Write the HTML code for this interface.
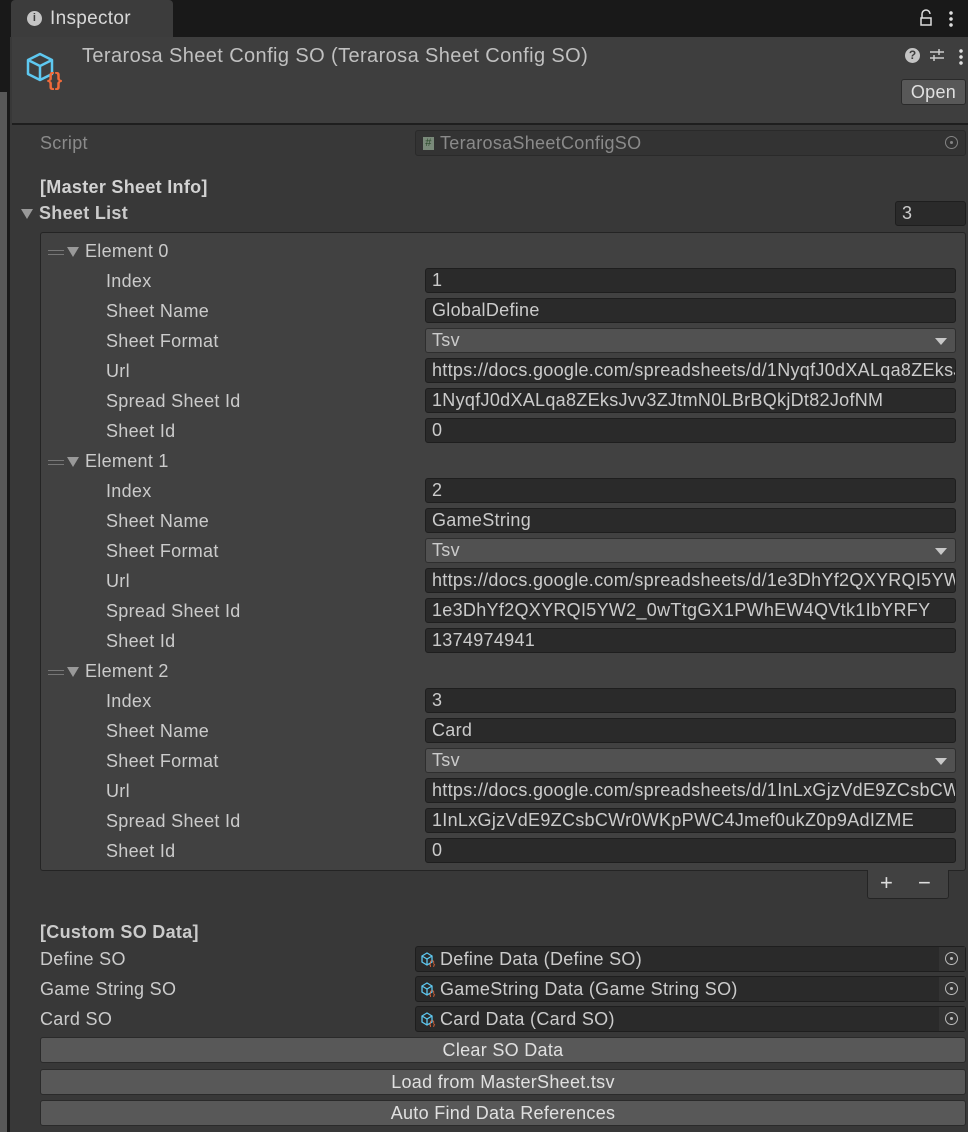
<!DOCTYPE html>
<html><head><meta charset="utf-8"><style>
*{box-sizing:border-box;margin:0;padding:0}
body{width:968px;height:1132px;background:#383838;font-family:"Liberation Sans",sans-serif;font-size:18px;letter-spacing:0.3px;color:#cbcbcb;position:relative;overflow:hidden}
.a{position:absolute;white-space:nowrap;overflow:hidden}
.lbl{position:absolute;left:106px;line-height:20px}
.fld{position:absolute;left:425px;width:531px;height:25px;background:#2a2a2a;border:1px solid #1e1e1e;border-radius:3px;padding-left:6px;line-height:23px;white-space:nowrap;overflow:hidden}
.dd{background:#515151;border-color:#2e2e2e}
.dd:after{content:"";position:absolute;right:8px;top:9px;border-left:6px solid transparent;border-right:6px solid transparent;border-top:7px solid #c8c8c8}
.el{position:absolute;left:48px;line-height:20px}
.el .h{display:inline-block;width:16px;height:5px;border-top:1px solid #777;border-bottom:1px solid #777;vertical-align:middle;margin-right:3px}
.tri{display:inline-block;border-left:6px solid transparent;border-right:6px solid transparent;border-top:10px solid #999;vertical-align:middle;margin-right:6px}
.obj{position:absolute;left:415px;width:551px;height:26px;background:#2a2a2a;border:1px solid #1e1e1e;border-radius:3px;line-height:24px;padding-left:24px}
.obj .pick{position:absolute;right:0;top:0;width:26px;height:24px;background:#333}
.pick:after{content:"";position:absolute;left:6px;top:5px;width:11px;height:11px;border:1.5px solid #bbb;border-radius:50%}
.pick:before{content:"";position:absolute;left:11px;top:10px;width:3px;height:3px;background:#bbb;border-radius:50%}
.btn{position:absolute;left:40px;width:926px;height:26px;background:#585858;border:1px solid #2a2a2a;border-radius:3px;text-align:center;line-height:24px;color:#e0e0e0}
.ic{position:absolute;left:4px;top:4px}
</style></head><body>
<div class="a" style="left:0;top:0;width:968px;height:37px;background:#191919"></div>
<div class="a" style="left:11px;top:0;width:162px;height:37px;background:#3c3c3c;border-radius:4px 4px 0 0"></div>
<div class="a" style="left:27px;top:11px;width:15px;height:15px;border-radius:50%;background:#c4c4c4;color:#3c3c3c;font-size:11px;font-weight:bold;text-align:center;line-height:15px">i</div>
<div class="a" style="left:50px;top:8px;font-size:19px;color:#d8d8d8">Inspector</div>
<svg class="a" style="left:918px;top:8px" width="16" height="20"><path d="M4 10V6a4 4 0 0 1 8 0" stroke="#ddd" stroke-width="1.5" fill="none"/><rect x="3" y="10" width="10" height="7" stroke="#ddd" stroke-width="1.5" fill="none"/></svg>
<div class="a" style="left:949px;top:10px;width:4px;height:18px;background:radial-gradient(circle,#ddd 1.6px,transparent 2px) 0 0/4px 6px"></div>
<div class="a" style="left:0;top:37px;width:10px;height:1095px;background:#191919"></div>
<div class="a" style="left:0;top:92px;width:7px;height:1040px;background:#585858"></div>
<div class="a" style="left:12px;top:37px;width:956px;height:86px;background:#3e3e3e"></div>
<div class="a" style="left:12px;top:123px;width:956px;height:2px;background:#1e1e1e"></div>
<svg class="a" style="left:24px;top:46px" width="48" height="46"><path d="M4 14 L16 8 L28 14 L28 28 L16 34 L4 28 Z M4 14 L16 20 L28 14 M16 20 L16 34" stroke="#5ec8f0" stroke-width="2.5" fill="none" stroke-linejoin="round"/><text x="23" y="40" font-family="Liberation Sans" font-weight="bold" font-size="19" fill="#f06a3a">{}</text></svg>
<div class="a" style="left:82px;top:45px;font-size:20px;letter-spacing:0.4px;color:#c0c0c0">Terarosa Sheet Config SO (Terarosa Sheet Config SO)</div>
<div class="a" style="left:905px;top:48px;width:15px;height:15px;border-radius:50%;background:#c4c4c4;color:#3e3e3e;font-size:12px;font-weight:bold;text-align:center;line-height:15px;letter-spacing:0">?</div>
<svg class="a" style="left:929px;top:47px" width="16" height="16"><path d="M1 5H15M1 11H15M10 2V8M5 8V14" stroke="#ccc" stroke-width="1.5"/></svg>
<div class="a" style="left:959px;top:48px;width:4px;height:18px;background:radial-gradient(circle,#ddd 1.6px,transparent 2px) 0 0/4px 6px"></div>
<div class="a" style="left:901px;top:79px;width:65px;height:26px;background:#585858;border:1px solid #2a2a2a;border-radius:3px;text-align:center;line-height:24px;color:#e0e0e0">Open</div>

<div class="a" style="left:40px;top:133px;color:#8a8a8a">Script</div>
<div class="a" style="left:415px;top:130px;width:551px;height:26px;background:#333;border:1px solid #2a2a2a;border-radius:3px;line-height:24px;padding-left:24px;color:#8a8a8a"><span style="position:absolute;left:7px;top:6px;width:11px;height:13px;background:#7a8a7a;color:#2a4a2a;font-size:11px;line-height:13px;text-align:center">#</span>TerarosaSheetConfigSO<span class="pick" style="position:absolute;right:0;top:0;width:26px;height:24px;opacity:.6"></span></div>
<div class="a" style="left:40px;top:177px;font-weight:bold;color:#d2d2d2">[Master Sheet Info]</div>
<div class="a" style="left:21px;top:203px;font-weight:bold"><span class="tri"></span>Sheet List</div>
<div class="fld" style="left:895px;width:71px;top:201px">3</div>

<div class="a" style="left:40px;top:232px;width:926px;height:639px;background:#414141;border:1px solid #242424;border-radius:3px"></div>

<div class="el" style="top:241px"><span class="h"></span><span class="tri"></span>Element 0</div>
<div class="lbl" style="top:271px">Index</div><div class="fld" style="top:268px">1</div>
<div class="lbl" style="top:301px">Sheet Name</div><div class="fld" style="top:298px">GlobalDefine</div>
<div class="lbl" style="top:331px">Sheet Format</div><div class="fld dd" style="top:328px">Tsv</div>
<div class="lbl" style="top:361px">Url</div><div class="fld" style="top:358px">https://docs.google.com/spreadsheets/d/1NyqfJ0dXALqa8ZEksJvv3ZJtmN0LBrBQkjDt82JofNM</div>
<div class="lbl" style="top:391px">Spread Sheet Id</div><div class="fld" style="top:388px">1NyqfJ0dXALqa8ZEksJvv3ZJtmN0LBrBQkjDt82JofNM</div>
<div class="lbl" style="top:421px">Sheet Id</div><div class="fld" style="top:418px">0</div>

<div class="el" style="top:451px"><span class="h"></span><span class="tri"></span>Element 1</div>
<div class="lbl" style="top:481px">Index</div><div class="fld" style="top:478px">2</div>
<div class="lbl" style="top:511px">Sheet Name</div><div class="fld" style="top:508px">GameString</div>
<div class="lbl" style="top:541px">Sheet Format</div><div class="fld dd" style="top:538px">Tsv</div>
<div class="lbl" style="top:571px">Url</div><div class="fld" style="top:568px">https://docs.google.com/spreadsheets/d/1e3DhYf2QXYRQI5YW2_0wTtgGX1PWhEW4QVtk1IbYRFY</div>
<div class="lbl" style="top:601px">Spread Sheet Id</div><div class="fld" style="top:598px">1e3DhYf2QXYRQI5YW2_0wTtgGX1PWhEW4QVtk1IbYRFY</div>
<div class="lbl" style="top:631px">Sheet Id</div><div class="fld" style="top:628px">1374974941</div>

<div class="el" style="top:661px"><span class="h"></span><span class="tri"></span>Element 2</div>
<div class="lbl" style="top:691px">Index</div><div class="fld" style="top:688px">3</div>
<div class="lbl" style="top:721px">Sheet Name</div><div class="fld" style="top:718px">Card</div>
<div class="lbl" style="top:751px">Sheet Format</div><div class="fld dd" style="top:748px">Tsv</div>
<div class="lbl" style="top:781px">Url</div><div class="fld" style="top:778px">https://docs.google.com/spreadsheets/d/1InLxGjzVdE9ZCsbCWr0WKpPWC4Jmef0ukZ0p9AdIZME</div>
<div class="lbl" style="top:811px">Spread Sheet Id</div><div class="fld" style="top:808px">1InLxGjzVdE9ZCsbCWr0WKpPWC4Jmef0ukZ0p9AdIZME</div>
<div class="lbl" style="top:841px">Sheet Id</div><div class="fld" style="top:838px">0</div>

<div class="a" style="left:867px;top:870px;width:82px;height:29px;background:#414141;border:1px solid #242424;border-top:none;border-radius:0 0 3px 3px;font-size:22px;line-height:26px;color:#ddd"><span style="position:absolute;left:12px">+</span><span style="position:absolute;left:50px">−</span></div>

<div class="a" style="left:40px;top:922px;font-weight:bold">[Custom SO Data]</div>
<div class="a" style="left:40px;top:949px">Define SO</div>
<div class="a" style="left:40px;top:979px">Game String SO</div>
<div class="a" style="left:40px;top:1009px">Card SO</div>
<div class="obj" style="top:946px"><svg class="ic" width="16" height="16"><path d="M2 5L7 2L12 5V11L7 14L2 11Z M2 5L7 8L12 5M7 8V14" stroke="#5ec8f0" stroke-width="1.3" fill="none"/><text x="9" y="16" font-size="9" fill="#f06a3a" font-family="Liberation Sans">{}</text></svg>Define Data (Define SO)<span class="pick"></span></div>
<div class="obj" style="top:976px"><svg class="ic" width="16" height="16"><path d="M2 5L7 2L12 5V11L7 14L2 11Z M2 5L7 8L12 5M7 8V14" stroke="#5ec8f0" stroke-width="1.3" fill="none"/><text x="9" y="16" font-size="9" fill="#f06a3a" font-family="Liberation Sans">{}</text></svg>GameString Data (Game String SO)<span class="pick"></span></div>
<div class="obj" style="top:1006px"><svg class="ic" width="16" height="16"><path d="M2 5L7 2L12 5V11L7 14L2 11Z M2 5L7 8L12 5M7 8V14" stroke="#5ec8f0" stroke-width="1.3" fill="none"/><text x="9" y="16" font-size="9" fill="#f06a3a" font-family="Liberation Sans">{}</text></svg>Card Data (Card SO)<span class="pick"></span></div>
<div class="btn" style="top:1037px">Clear SO Data</div>
<div class="btn" style="top:1069px">Load from MasterSheet.tsv</div>
<div class="btn" style="top:1100px">Auto Find Data References</div>
</body></html>
